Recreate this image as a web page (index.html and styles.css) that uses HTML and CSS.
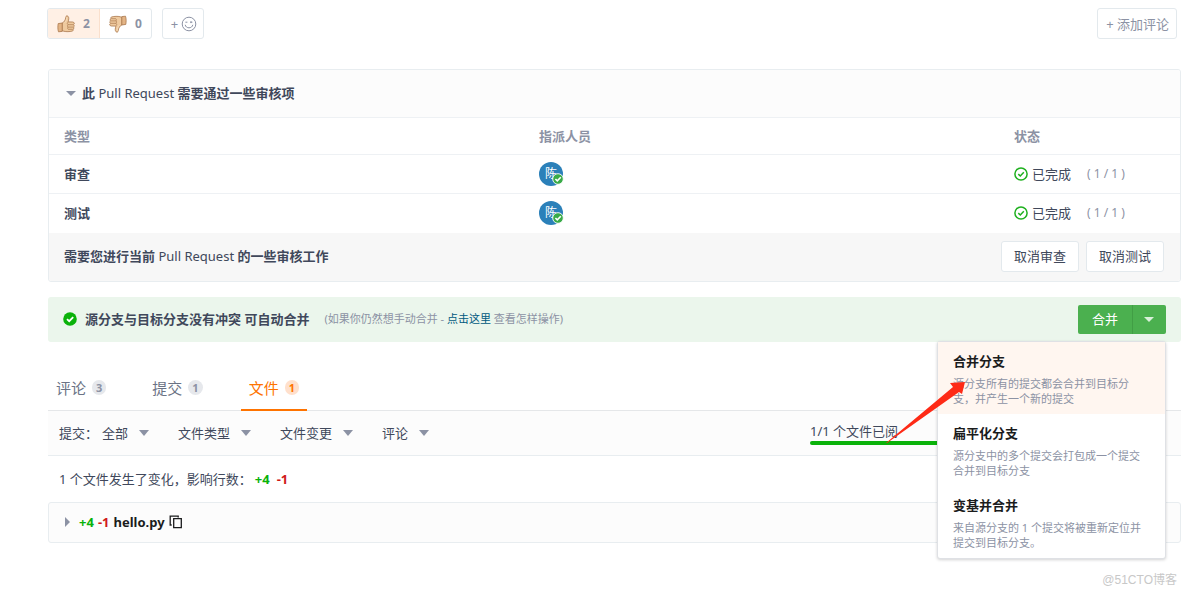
FILE: index.html
```html
<!DOCTYPE html>
<html lang="zh-CN">
<head>
<meta charset="utf-8">
<title>Pull Request</title>
<link rel="stylesheet" href="styles.css">
</head>
<body>
<svg class="defs" aria-hidden="true">
  <symbol id="thumb" viewBox="0 0 18 18">
    <path d="M5 8.200C7 7.300 8.600 5 8.800 2.200 8.900 .9 10 .5 10.900 1.200c1.300 1.200.9 3.600.2 5.700l4.600.1c1.900.1 2 2.200.8 2.700 1.100.5.9 2-.1 2.400.8.6.5 1.800-.4 2.100.5.7.2 1.700-.8 1.900-2.600.7-6 .7-8.200.2L5 15.600z" fill="#efca9f" stroke="#a9774c" stroke-width=".8"/>
    <path d="M1.200 8.600 5.200 8v8.400l-3.700.4C.7 14.500.7 11 1.200 8.600z" fill="#e3b485" stroke="#a9774c" stroke-width=".8"/>
    <path d="M11 9.700h5.200M11 12.100h5M11.200 14.300h4.500M11 7.200c-.9.6-1 1.700 0 2.500-.8.8-.7 1.800 0 2.400-.6.8-.5 1.700.2 2.200" fill="none" stroke="#a9774c" stroke-width=".7"/>
    <path d="M9.700 2.200c.2 2-.6 4-2 5.500" fill="none" stroke="#f8dfc0" stroke-width=".8"/>
  </symbol>
  <symbol id="ring-check" viewBox="0 0 14 14">
    <circle cx="7" cy="7" r="6.100" fill="none" stroke="#1eb01e" stroke-width="1.500"/>
    <path d="M4.300 7.100 6.300 9 9.800 5.300" fill="none" stroke="#1eb01e" stroke-width="1.500"/>
  </symbol>
  <symbol id="solid-check" viewBox="0 0 14 14">
    <circle cx="7" cy="7" r="6.800" fill="#0ab20a"/>
    <path d="M4 7.100 6.200 9.200 10.200 5.100" fill="none" stroke="#fff" stroke-width="1.800"/>
  </symbol>
  <symbol id="badge-check" viewBox="0 0 12 12">
    <circle cx="6" cy="6" r="5.300" fill="#39ab48" stroke="#fff" stroke-width=".9"/>
    <path d="M3.400 6 5.300 7.900 8.800 4.300" fill="none" stroke="#fff" stroke-width="1.600"/>
  </symbol>
</svg>

<header class="toolbar">
  <div class="reactions">
    <button class="reaction reaction-on" type="button" aria-label="赞 2"><svg class="thumb"><use href="#thumb"/></svg><span>2</span></button>
    <button class="reaction" type="button" aria-label="踩 0"><svg class="thumb thumb-down"><use href="#thumb"/></svg><span>0</span></button>
  </div>
  <button class="outline-button emoji-button" type="button" aria-label="添加表情">
    <span>+</span>
    <svg class="smile" viewBox="0 0 16 16"><circle cx="8" cy="8" r="6.800"/><path d="M4.200 8.800c.6 4 7 4 7.600 0M4.400 6.200h2M10 5.300v1.800M9.200 6.200h2.200"/></svg>
  </button>
  <button class="outline-button comment-button" type="button">+ 添加评论</button>
</header>

<main class="content">
  <section class="review">
    <h2 class="review-title"><span class="caret"></span><span><b>此</b> Pull Request <b>需要通过一些审核项</b></span></h2>
    <table class="review-table">
      <thead>
        <tr><th class="wide">类型</th><th class="wide">指派人员</th><th>状态</th></tr>
      </thead>
      <tbody>
        <tr>
          <td><b>审查</b></td>
          <td><span class="avatar">陈<svg class="avatar-badge"><use href="#badge-check"/></svg></span></td>
          <td><span class="status"><svg class="icon"><use href="#ring-check"/></svg>已完成<span class="tally">( 1 / 1 )</span></span></td>
        </tr>
        <tr>
          <td><b>测试</b></td>
          <td><span class="avatar">陈<svg class="avatar-badge"><use href="#badge-check"/></svg></span></td>
          <td><span class="status"><svg class="icon"><use href="#ring-check"/></svg>已完成<span class="tally">( 1 / 1 )</span></span></td>
        </tr>
      </tbody>
    </table>
    <div class="review-actions">
      <p><b>需要您进行当前</b> Pull Request <b>的一些审核工作</b></p>
      <button class="outline-button" type="button">取消审查</button>
      <button class="outline-button" type="button">取消测试</button>
    </div>
  </section>

  <section class="merge">
    <svg class="icon"><use href="#solid-check"/></svg>
    <b class="merge-title">源分支与目标分支没有冲突 可自动合并</b>
    <span class="merge-note">(如果你仍然想手动合并 - <a href="#">点击这里</a> 查看怎样操作)</span>
    <div class="merge-control">
      <button class="merge-button" type="button">合并</button>
      <button class="merge-toggle" type="button" aria-label="选择合并方式"><span class="caret"></span></button>
      <div class="merge-menu">
        <button class="merge-option merge-option-on" type="button"><b>合并分支</b><span>源分支所有的提交都会合并到目标分支，并产生一个新的提交</span></button>
        <button class="merge-option" type="button"><b>扁平化分支</b><span>源分支中的多个提交会打包成一个提交合并到目标分支</span></button>
        <button class="merge-option" type="button"><b>变基并合并</b><span>来自源分支的 1 个提交将被重新定位并提交到目标分支。</span></button>
        <svg class="arrow" viewBox="0 0 80 62" aria-hidden="true"><path d="M0 61 67 5 64 1 79 0 76 12 73 10 1 61z" fill="#fe2a16"/></svg>
      </div>
    </div>
  </section>

  <nav class="tabs">
    <a class="tab" href="#">评论<span class="count">3</span></a>
    <a class="tab" href="#">提交<span class="count">1</span></a>
    <a class="tab tab-on" href="#">文件<span class="count">1</span></a>
  </nav>

  <div class="filters">
    <label for="commit">提交：</label>
    <span class="filter"><select id="commit"><option>全部</option></select></span>
    <span class="filter"><select aria-label="文件类型"><option>文件类型</option></select></span>
    <span class="filter"><select aria-label="文件变更"><option>文件变更</option></select></span>
    <span class="filter"><select aria-label="评论"><option>评论</option></select></span>
    <div class="viewed"><span>1/1 个文件已阅</span><div class="viewed-bar"></div></div>
  </div>

  <p class="summary">1 个文件发生了变化，影响行数：<b class="added">+4</b><b class="removed">-1</b></p>

  <section class="file">
    <span class="caret caret-right"></span>
    <b class="added">+4</b>
    <b class="removed">-1</b>
    <b class="file-name">hello.py</b>
    <button class="copy" type="button" aria-label="复制"><svg viewBox="0 0 14 14"><path d="M4.700 3.700h7.600v9H4.700zM2.700 10H1.200V1.200h8v1.300"/></svg></button>
  </section>
</main>

<footer class="watermark">@51CTO博客</footer>
</body>
</html>
```
FILE: styles.css
```css
* {
  box-sizing: border-box;
}

body {
  margin: 0;
  background: #fff;
  color: #40485b;
  font: 13px/20px "Noto Sans", "Noto Sans CJK SC", sans-serif;
}

button,
select {
  margin: 0;
  border: 0;
  padding: 0;
  background: none;
  color: inherit;
  font: inherit;
}

h2,
p {
  margin: 0;
  font-size: 13px;
  font-weight: 400;
}

.defs {
  position: absolute;
  width: 0;
  height: 0;
}

.icon {
  flex: none;
  width: 14px;
  height: 14px;
}

.caret {
  flex: none;
  border: 5px solid transparent;
  border-top-color: #8c92a4;
  border-bottom: 0;
}

.caret-right {
  border: 5px solid transparent;
  border-left-color: #8c92a4;
  border-right: 0;
}

.added {
  color: #0ab20a;
}

.removed {
  color: #d01919;
}

.outline-button {
  height: 31px;
  padding: 0 12px;
  border: 1px solid #e3e9ed;
  border-radius: 3px;
  background: #fff;
  white-space: nowrap;
}

/* Reactions */

.toolbar {
  display: flex;
  gap: 10px;
  padding: 8px 7px 30px 47px;
  color: #8c92a4;
}

.reactions {
  display: flex;
  border: 1px solid #e3e9ed;
  border-radius: 3px;
  overflow: hidden;
}

.reaction {
  display: flex;
  align-items: center;
  gap: 8px;
  padding: 0 9px;
  font-size: 12px;
  font-weight: 700;
}

.reaction-on {
  border-right: 1px solid #fae0cd;
  background: #fff0e5;
}

.thumb {
  width: 18px;
  height: 18px;
}

.thumb-down {
  transform: scale(-1, -1);
}

.emoji-button {
  display: flex;
  align-items: center;
  gap: 3px;
  padding: 0 6px 0 8px;
}

.smile {
  width: 16px;
  height: 16px;
  fill: none;
  stroke: #8c92a4;
}

.comment-button {
  margin-left: auto;
  padding: 0 7px 0 8px;
}

/* Review */

.content {
  padding: 0 3px 0 48px;
}

.review {
  border: 1px solid #e8edf0;
  border-radius: 3px;
  overflow: hidden;
}

.review-title {
  display: flex;
  align-items: center;
  gap: 6px;
  padding: 13px 17px 14px;
  background: #fcfcfc;
}

.review-table {
  width: 100%;
  border-collapse: collapse;
  table-layout: fixed;
}

.review-table th,
.review-table td {
  height: 39px;
  padding: 0 15px;
  border-top: 1px solid #eef1f4;
  text-align: left;
}

.review-table th {
  height: 37px;
  color: #8c92a4;
}

.review-table .wide {
  width: 42%;
}

.avatar {
  display: flex;
  align-items: center;
  justify-content: center;
  position: relative;
  width: 24px;
  height: 24px;
  border-radius: 50%;
  background: #2b80b9;
  color: #fff;
  font-size: 12px;
}

.avatar-badge {
  position: absolute;
  right: -1px;
  bottom: 1px;
  width: 12px;
  height: 12px;
}

.status {
  display: flex;
  align-items: center;
  gap: 4px;
}

.tally {
  margin-left: 12px;
  color: #8c92a4;
  font-size: 12px;
}

.review-actions {
  display: flex;
  align-items: center;
  gap: 7px;
  padding: 8px 16px 9px 15px;
  background: #f7f7f7;
}

.review-actions p {
  margin-right: auto;
}

/* Merge */

.merge {
  display: flex;
  align-items: center;
  margin-top: 15px;
  padding: 8px 15px;
  border-radius: 3px;
  background: #ebf6ec;
}

.merge-title {
  margin: 0 15px 0 8px;
}

.merge-note {
  color: #8c92a4;
  font-size: 11px;
}

.merge-note a {
  color: #005980;
  text-decoration: none;
}

.merge-control {
  display: flex;
  position: relative;
  margin-left: auto;
  color: #fff;
}

.merge-button,
.merge-toggle {
  display: flex;
  align-items: center;
  height: 29px;
  padding: 0 14px;
  border-radius: 2px 0 0 2px;
  background: #4bb04f;
}

.merge-toggle {
  padding: 0 12px 0 11px;
  border-left: 1px solid #419e45;
  border-radius: 0 2px 2px 0;
}

.merge-toggle .caret {
  border-top-color: #d9f0da;
}

.merge-menu {
  position: absolute;
  top: 36px;
  right: 0;
  z-index: 1;
  width: 229px;
  border: 1px solid #dfe1e5;
  border-radius: 3px;
  background: #fff;
  box-shadow: 0 1px 3px rgba(34, 36, 38, 0.2);
}

.merge-option {
  display: block;
  width: 100%;
  padding: 9px 16px 8px 15px;
  text-align: left;
}

.merge-option-on {
  background: #fff6f0;
}

.merge-option b {
  display: block;
  margin-bottom: 5px;
  color: #1b1c1d;
}

.merge-option span {
  display: block;
  color: #8c92a4;
  font-size: 11px;
  line-height: 15px;
}

.arrow {
  position: absolute;
  top: 40px;
  left: -52px;
  width: 80px;
  height: 62px;
}

/* Tabs */

.tabs {
  display: flex;
  gap: 30px;
  margin-top: 24px;
  border-bottom: 1px solid #e5e7e9;
}

.tab {
  display: flex;
  align-items: center;
  gap: 6px;
  margin-bottom: -1px;
  padding: 12px 8px 11px;
  border-bottom: 2px solid transparent;
  color: #6b7385;
  font-size: 15px;
  text-decoration: none;
}

.tab-on {
  border-color: #fe7300;
  color: #fe7300;
}

.count {
  min-width: 14px;
  padding: 0 4px;
  border-radius: 8px;
  background: #e6e8ec;
  color: #8c92a4;
  font-size: 11px;
  font-weight: 700;
  line-height: 15px;
  text-align: center;
}

.tab-on .count {
  background: #ffe0cc;
  color: #fe7300;
}

/* Files */

.filters {
  display: flex;
  align-items: center;
  height: 45px;
  padding-left: 11px;
  border-bottom: 1px solid #e8edf0;
  background: #fcfcfc;
}

.filter {
  display: flex;
  align-items: center;
  margin: 0 29px 0 4px;
}

.filter + .filter {
  margin-left: 0;
}

.filter select {
  padding-right: 20px;
  appearance: none;
}

.filter::after {
  content: "";
  margin-left: -10px;
  border: 5px solid transparent;
  border-top: 6px solid #8c92a4;
  border-bottom: 0;
  pointer-events: none;
}

.viewed {
  width: 371px;
  margin-left: auto;
  padding-right: 19px;
}

.viewed-bar {
  height: 4px;
  border-radius: 2px;
  background: #0ab20a;
}

.summary {
  padding: 13px 11px;
}

.summary .added {
  margin: 0 7px 0 3px;
}

.file {
  display: flex;
  align-items: center;
  gap: 4px;
  padding: 9px 16px 10px;
  border: 1px solid #e8edf0;
  border-radius: 3px;
  background: #fcfcfc;
}

.file .caret {
  margin-right: 5px;
}

.file-name {
  color: #1b1c1d;
}

.copy {
  display: flex;
}

.copy svg {
  width: 14px;
  height: 14px;
  fill: none;
  stroke: #1b1c1d;
  stroke-width: 1.3;
}

.watermark {
  padding: 27px 7px 4px;
  color: #c8c8c8;
  font-family: "Liberation Sans", "Noto Sans CJK SC", sans-serif;
  font-size: 12px;
  text-align: right;
}
```
